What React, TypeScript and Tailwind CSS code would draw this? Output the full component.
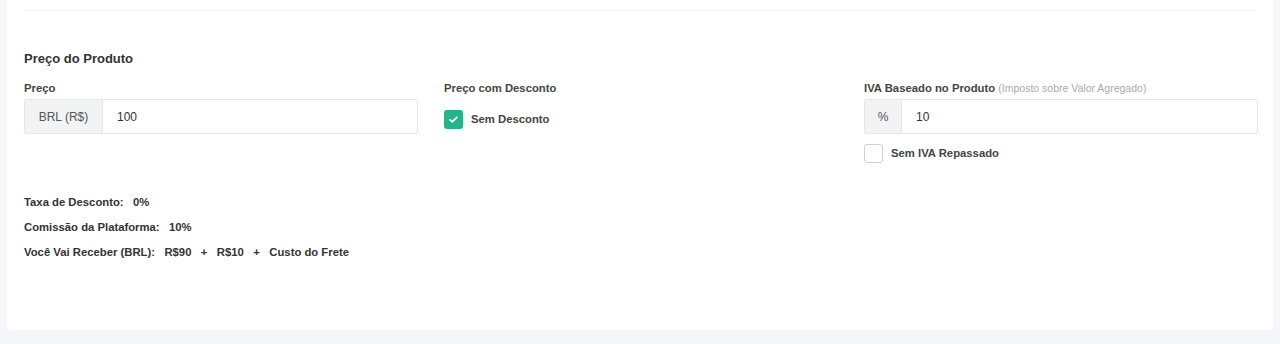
import React from 'react';

const Check = () => (
  <svg viewBox="0 0 16 16" className="w-[11px] h-[11px]" fill="none" stroke="white" strokeWidth="2.6" strokeLinecap="round" strokeLinejoin="round">
    <path d="M3 8.5l3.2 3L13 4.8" />
  </svg>
);

const AddonInput: React.FC<{ addon: string; value: string; addonW: string }> = ({ addon, value, addonW }) => (
  <div className="flex h-[35px] border border-[#e4e6eb] rounded-[2px] bg-white">
    <span className={`${addonW} flex items-center justify-center bg-[#f2f3f5] text-[12px] text-[#555] border-r border-[#e4e6eb]`}>{addon}</span>
    <span className="flex items-center pl-[14px] text-[12px] text-[#333]">{value}</span>
  </div>
);

export default function App() {
  return (
    <div className="w-[1280px] h-[344px] bg-[#f5f6fa] px-[7px] font-['Liberation_Sans',Arial,sans-serif] text-[#333]">
      <div className="h-[330px] bg-white rounded-b-[4px] px-[17px] pt-[10px]">
        <div className="h-px bg-[#f0f1f4]" />

        <h2 className="mt-[40px] text-[13px] font-bold leading-[16px] text-[#333]">Preço do Produto</h2>

        <div className="mt-[14px] grid grid-cols-3 gap-[26px] w-[1234px]">
          {/* Preço */}
          <div>
            <div className="text-[11.3px] font-bold leading-[14px] text-[#444]">Preço</div>
            <div className="mt-[4px]">
              <AddonInput addon="BRL (R$)" value="100" addonW="w-[78px]" />
            </div>
          </div>

          {/* Desconto */}
          <div>
            <div className="text-[11.3px] font-bold leading-[14px] text-[#444]">Preço com Desconto</div>
            <div className="mt-[15px] flex items-center gap-[8px]">
              <span className="w-[19px] h-[19px] rounded-[3px] bg-[#21b58a] flex items-center justify-center">
                <Check />
              </span>
              <span className="text-[11.3px] font-bold text-[#444]">Sem Desconto</span>
            </div>
          </div>

          {/* IVA */}
          <div>
            <div className="text-[11.3px] font-bold leading-[14px] text-[#444]">
              IVA Baseado no Produto{' '}
              <span className="text-[10.5px] font-normal text-[#aaa]">(Imposto sobre Valor Agregado)</span>
            </div>
            <div className="mt-[4px]">
              <AddonInput addon="%" value="10" addonW="w-[37px]" />
            </div>
            <div className="mt-[10px] flex items-center gap-[8px]">
              <span className="w-[19px] h-[19px] rounded-[3px] border border-[#cfd2d8] bg-white" />
              <span className="text-[11.3px] font-bold text-[#444]">Sem IVA Repassado</span>
            </div>
          </div>
        </div>

        <div className="mt-[32px] flex flex-col gap-[11px] text-[11.3px] font-bold leading-[14px] text-[#333]">
          <div>Taxa de Desconto:&nbsp;&nbsp; 0%</div>
          <div>Comissão da Plataforma:&nbsp;&nbsp; 10%</div>
          <div>
            Você Vai Receber (BRL):&nbsp;&nbsp; R$90&nbsp;&nbsp; +&nbsp;&nbsp; R$10&nbsp;&nbsp; +&nbsp;&nbsp; Custo do Frete
          </div>
        </div>
      </div>
    </div>
  );
}
